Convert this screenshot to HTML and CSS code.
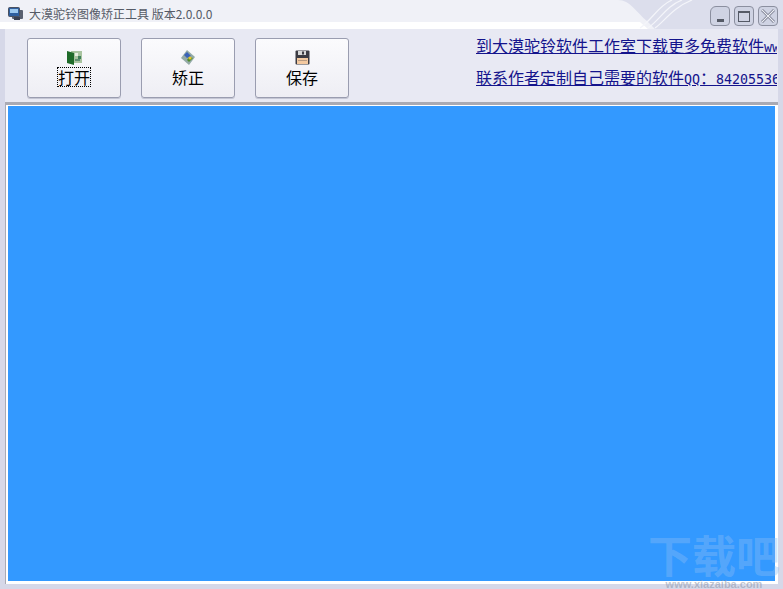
FILE: index.html
```html
<!DOCTYPE html>
<html lang="zh-CN">
  <head>
    <meta charset="UTF-8" />
    <title>大漠驼铃图像矫正工具 版本2.0.0.0</title>
    <link rel="stylesheet" href="styles.css">
  </head>
  <body>
    <div class="window">
      <!-- Title bar -->
      <div class="titlebar">
        <svg class="title-bg" width="783" height="29" viewBox="0 0 783 29">
          <rect width="783" height="29" fill="#dcdeec" />
          <path d="M0 0H618C630 0 636 12 648 22L655 29H0Z" fill="#f0f1f7" />
          <path d="M0 22H640L648 29H0Z" fill="#ffffff" />
          <path d="M640 28C652 20 658 6 672 0M648 28C660 20 666 6 682 0M655 28C664 22 672 8 692 0" fill="none" stroke="#f4f5fa" stroke-width="1.2" />
        </svg>
        <svg class="app-icon" width="16" height="14" viewBox="0 0 16 14">
          <rect x="4" y="3" width="11" height="9" rx="1" fill="#5a6170" />
          <rect x="0.5" y="0.5" width="11" height="9" rx="1" fill="#2f5f9e" stroke="#4a5160" />
          <rect x="2" y="2" width="8" height="4" fill="#9cc8ee" />
          <rect x="6" y="10" width="6" height="3" fill="#3a4050" />
        </svg>
        <span class="title-text">大漠驼铃图像矫正工具 版本2.0.0.0</span>
        <div class="window-buttons">
          <div class="win-btn btn-min"><span class="min-mark"></span></div>
          <div class="win-btn"><span class="max-mark"></span></div>
          <div class="win-btn">
            <svg width="16" height="16" viewBox="0 0 16 16">
              <path d="M2 2L14 14M14 2L2 14" stroke="#6a6e80" stroke-width="2.6" fill="none" />
              <path d="M2 2L14 14M14 2L2 14" stroke="#eef0f6" stroke-width="1.2" fill="none" />
            </svg>
          </div>
        </div>
      </div>

      <!-- Toolbar -->
      <div class="toolbar">
        <button class="tool-btn" type="button">
          <svg width="16" height="15" viewBox="0 0 16 15">
            <rect x="5" y="1" width="11" height="12" fill="#a9c4a0" />
            <rect x="9" y="3" width="3" height="3" fill="#e6efe2" />
            <rect x="12" y="6" width="3" height="3" fill="#3f7f5a" />
            <rect x="9" y="9" width="5" height="2" fill="#5f8f70" />
            <path d="M1 1L8 3V15L1 13Z" fill="#1f6b2a" />
          </svg>
          <span class="focus-label">打开</span>
        </button>
        <button class="tool-btn" type="button">
          <svg width="16" height="15" viewBox="0 0 16 15">
            <path d="M7 0L15 7L9 15L1 8Z" fill="#93aaa6" />
            <path d="M7 2L11 6L7 8L4 5Z" fill="#3a62b8" />
            <path d="M9 7L13 8L9 12L7 10Z" fill="#4f8a2a" />
            <circle cx="10" cy="8" r="1.6" fill="#e6c62e" />
          </svg>
          <span>矫正</span>
        </button>
        <button class="tool-btn" type="button">
          <svg width="15" height="15" viewBox="0 0 15 15">
            <rect x="0.5" y="0.5" width="14" height="14" rx="1" fill="#3b3b42" />
            <rect x="3" y="1" width="8" height="4" fill="#d8d8d8" />
            <rect x="7" y="1.5" width="2" height="3" fill="#3b3b42" />
            <rect x="2" y="8" width="11" height="6" fill="#f3c9a0" />
            <rect x="3" y="10" width="9" height="1" fill="#b89a80" />
          </svg>
          <span>保存</span>
        </button>
        <div class="links">
          <a href="#">到大漠驼铃软件工作室下载更多免费软件<span class="link-latin">www.xiazaiba.com</span></a>
          <a href="#">联系作者定制自己需要的软件<span class="link-latin">QQ</span>：<span class="link-latin">84205536</span></a>
        </div>
      </div>

      <!-- Image area -->
      <div class="canvas-wrap">
        <div class="canvas"></div>
      </div>

      <div class="watermark">
        <span class="wm-title">下载吧</span>
        <span class="wm-url">www.xiazaiba.com</span>
      </div>
    </div>
  </body>
</html>
```

FILE: styles.css
```css
* {
  margin: 0;
  padding: 0;
  box-sizing: border-box;
}

html,
body {
  width: 783px;
  height: 589px;
  overflow: hidden;
}

body {
  font-family: "Noto Sans CJK SC", "Liberation Sans", sans-serif;
  background-color: #e8e9f3;
}

.window {
  position: relative;
  display: flex;
  flex-direction: column;
  width: 783px;
  height: 589px;
  overflow: hidden;
  background-color: #d6d8e8;
}

/* Title bar */
.titlebar {
  position: relative;
  display: flex;
  align-items: center;
  flex: none;
  height: 29px;
  padding: 0 5px 0 8px;
  border-bottom: 1px solid #a6a8b8;
}

.title-bg {
  position: absolute;
  left: 0;
  top: 0;
}

.app-icon {
  position: relative;
  margin: 0 5px 0 0;
}

.title-text {
  position: relative;
  font-size: 12px;
  line-height: 16px;
  color: #555a66;
}

.window-buttons {
  position: relative;
  display: flex;
  align-self: flex-start;
  gap: 4px;
  margin: 6px 0 0 auto;
}

.win-btn {
  display: flex;
  align-items: center;
  justify-content: center;
  width: 20px;
  height: 20px;
  border: 1px solid #8b8f9f;
  border-radius: 4px;
  background-color: #cfd3e3;
}

.btn-min {
  border-radius: 6px 4px 4px 4px;
  align-items: flex-end;
  padding-bottom: 3px;
}

.min-mark {
  width: 7px;
  height: 3px;
  background-color: #555a66;
}

.max-mark {
  width: 12px;
  height: 11px;
  border: 1px solid #555a66;
  border-top-width: 2px;
}

/* Toolbar */
.toolbar {
  display: flex;
  flex: none;
  gap: 20px;
  height: 73px;
  margin: 0 5px;
  padding: 9px 0 0 22px;
  background-color: #e8e9f3;
  overflow: hidden;
}

.tool-btn {
  display: flex;
  flex-direction: column;
  align-items: center;
  flex: none;
  width: 94px;
  height: 60px;
  padding-top: 11px;
  font-family: inherit;
  font-size: 16px;
  line-height: 20px;
  color: #000;
  background: linear-gradient(#fbfbfd, #eeeef4);
  border: 1px solid #9a9db0;
  border-radius: 3px;
  box-shadow: 0 1px 0 #c4c6d4;
}

.tool-btn span {
  margin-top: 2px;
  padding: 0 1px;
}

.tool-btn .focus-label {
  outline: 1px dotted #000;
  outline-offset: -1px;
}

.links {
  display: flex;
  flex-direction: column;
  gap: 10px;
  flex: none;
  width: 301px;
  margin: -3px 0 0 107px;
  overflow: hidden;
}

.links a {
  display: block;
  height: 22px;
  font-size: 16px;
  line-height: 21px;
  color: #14148c;
  white-space: nowrap;
}

.link-latin {
  font-family: "DejaVu Sans Mono", monospace;
  font-size: 13.3px;
}

/* Image area */
.canvas-wrap {
  flex: 1;
  margin: 0 5px 5px 5px;
  padding: 1px 3px 3px 2px;
  background-color: #ffffff;
  border-top: 3px solid #a9aab4;
  border-left: 1px solid #a9aab4;
}

.canvas {
  height: 100%;
  background-color: #3399ff;
}

/* Watermark lying over the window */
.watermark {
  position: absolute;
  right: 3px;
  bottom: 0;
  display: flex;
  flex-direction: column;
  align-items: center;
  width: 132px;
  color: rgba(140, 190, 245, 0.4);
  white-space: nowrap;
  pointer-events: none;
}

.wm-title {
  font-size: 44px;
  font-weight: 700;
  line-height: 46px;
}

.wm-url {
  margin-top: 2px;
  font-family: "Liberation Sans", sans-serif;
  font-size: 11px;
  font-weight: 700;
  line-height: 10px;
  color: rgba(140, 150, 170, 0.55);
}
```
